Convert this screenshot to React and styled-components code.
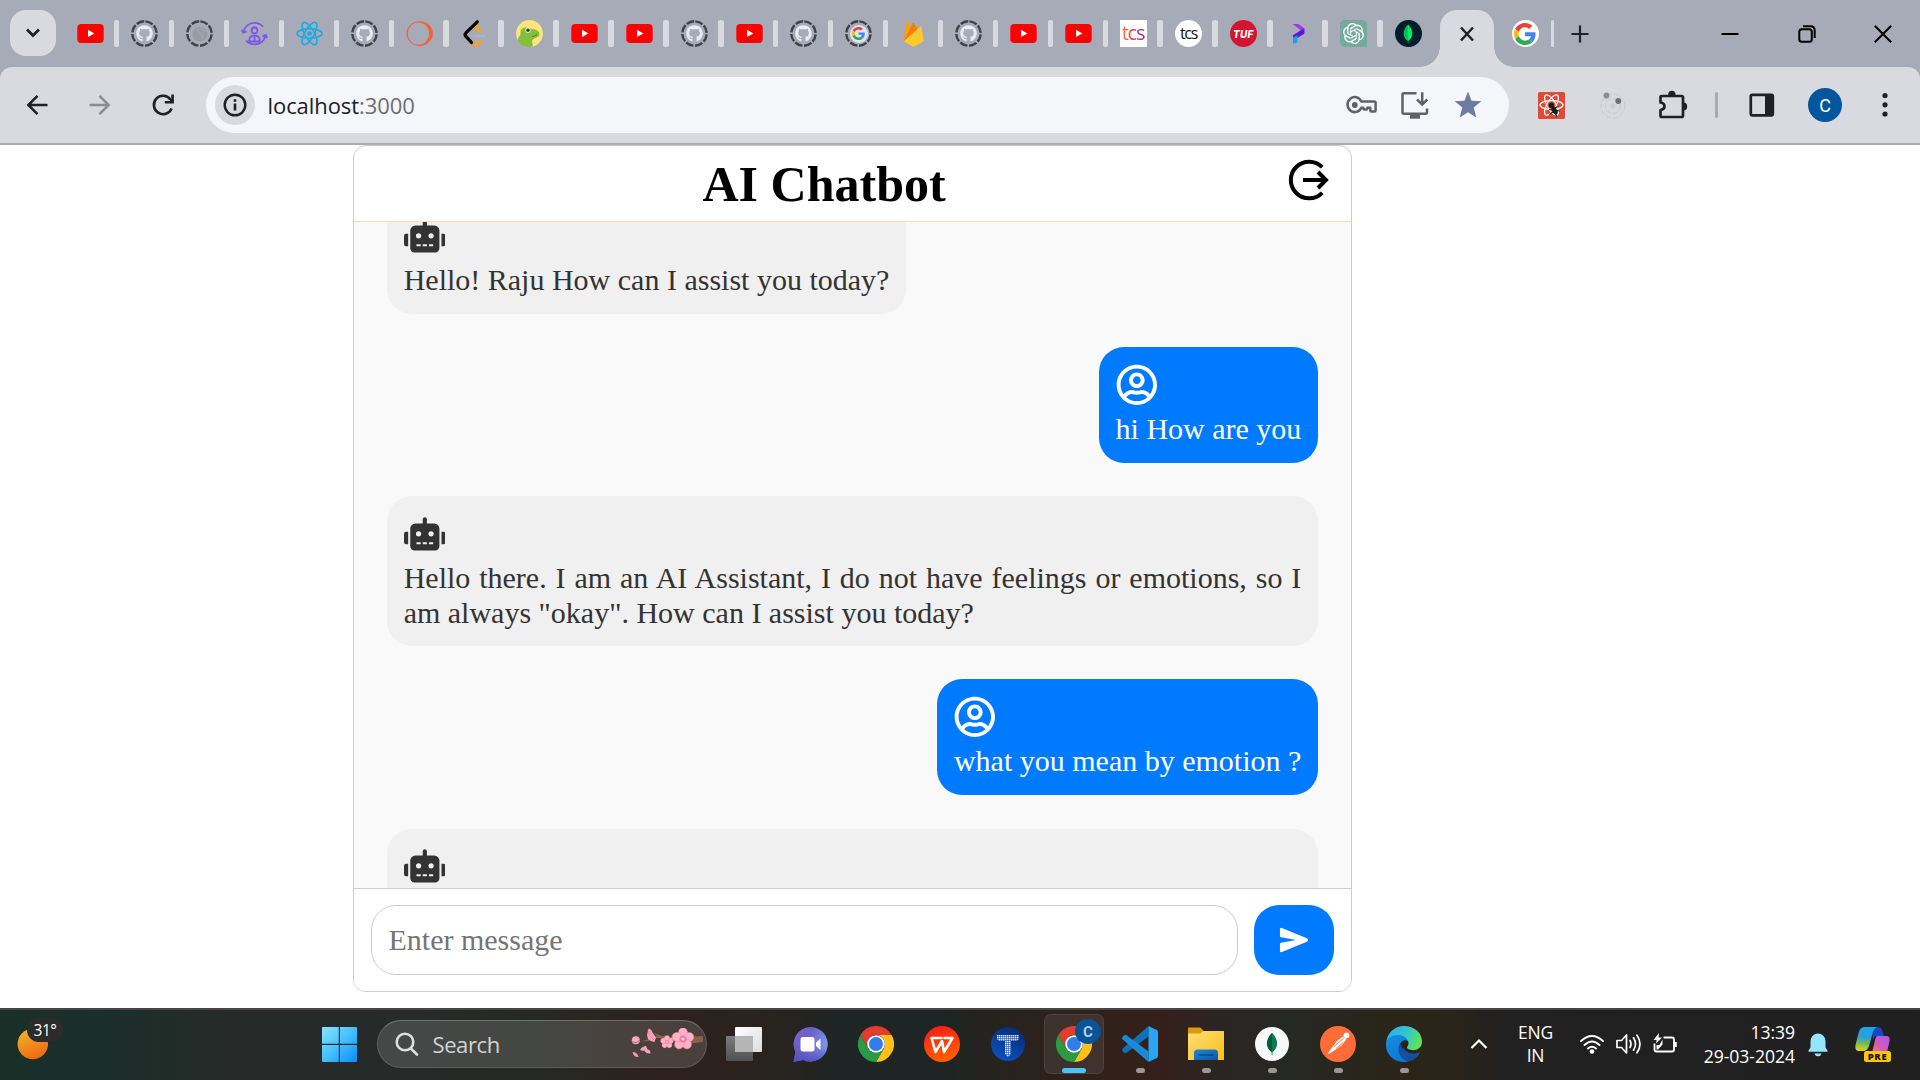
import React from "react";
import styled, { createGlobalStyle, css } from "styled-components";
import { FaGithub, FaRobot, FaRegUserCircle } from "react-icons/fa";
import { IoSend } from "react-icons/io5";
import { SiOpenai } from "react-icons/si";

const GlobalStyle = createGlobalStyle`
  *, *::before, *::after { box-sizing: border-box; }
  html, body { margin: 0; padding: 0; overflow: hidden; background: #fff; }
  svg { display: block; flex: none; }
`;

const SERIF = `"Liberation Serif", "Times New Roman", serif`;
const UI = `"Open Sans", "Noto Sans", sans-serif`;

const Screen = styled.div`
  width: 1920px;
  height: 1080px;
  display: flex;
  flex-direction: column;
  overflow: hidden;
  background: #fff;
  font-family: ${UI};
`;

/* ---------- browser chrome ---------- */

const TabStrip = styled.div`
  height: 67px;
  flex: none;
  display: flex;
  align-items: flex-start;
  padding-left: 10px;
  background: #a7abb7;
`;

const TabSearch = styled.div`
  width: 46px;
  height: 46px;
  margin: 10px 8.5px 0 0;
  display: flex;
  align-items: center;
  justify-content: center;
  border-radius: 16px;
  background: #d9dadf;
`;

const Tab = styled.div`
  flex: none;
  width: ${(p) => p.$width || 54.93}px;
  height: 67px;
  padding-left: 12px;
  display: flex;
  align-items: center;
  justify-content: space-between;
`;

const TabSeparator = styled.span`
  width: ${(p) => p.$width || 5.5}px;
  height: 27px;
  border-radius: 2px;
  background: #d9dadf;
`;

const ActiveTab = styled.div`
  position: relative;
  flex: none;
  width: 53.5px;
  height: 57px;
  margin: 10px 0 0 2.5px;
  padding-top: 14px;
  display: flex;
  justify-content: center;
  border-radius: 17px 17px 0 0;
  background: #d9dadf;
  &::before,
  &::after {
    content: "";
    position: absolute;
    bottom: 0;
    width: 20px;
    height: 20px;
  }
  &::before {
    right: 100%;
    background: radial-gradient(circle at 0 0, transparent 19.5px, #d9dadf 20px);
  }
  &::after {
    left: 100%;
    background: radial-gradient(circle at 100% 0, transparent 19.5px, #d9dadf 20px);
  }
`;

const GoogleSlot = styled.div`
  margin-left: 6px;
`;

const NewTab = styled.div`
  width: 52px;
  height: 67px;
  display: flex;
  align-items: center;
  justify-content: center;
`;

const WindowControls = styled.div`
  margin: 0 -1px 0 auto;
  display: flex;
`;

const WindowButton = styled.div`
  width: 76.3px;
  height: 67px;
  display: flex;
  align-items: center;
  justify-content: center;
`;

const ToolbarBack = styled.div`
  flex: none;
  background: #a7abb7;
`;

const Toolbar = styled.div`
  height: 78px;
  padding: 0 7px 0 5px;
  display: flex;
  align-items: center;
  border-radius: 12px 12px 0 0;
  border-bottom: 2px solid #abacb2;
  background: #d9dadf;
`;

const ToolCell = styled.div`
  width: ${(p) => p.$width}px;
  display: flex;
  align-items: center;
  justify-content: center;
`;

const AddressBar = styled.div`
  flex: 1;
  height: 56px;
  margin: 0 12.5px 0 12px;
  padding: 0 14px 0 8.5px;
  display: flex;
  align-items: center;
  border-radius: 28px;
  background: #f5f6f9;
`;

const SiteInfo = styled.div`
  width: 40px;
  height: 40px;
  display: flex;
  align-items: center;
  justify-content: center;
  border-radius: 50%;
  background: #d9dadf;
`;

const Url = styled.div`
  flex: 1;
  margin-left: 13px;
  font-size: 22px;
  letter-spacing: -0.07px;
  color: #202124;
  span { color: #6b6e73; }
`;

const ToolDivider = styled.span`
  width: 3px;
  height: 26px;
  margin: 0 12px;
  border-radius: 2px;
  background: #a7abb7;
`;

const Avatar = styled.div`
  width: 34px;
  height: 34px;
  display: flex;
  align-items: center;
  justify-content: center;
  border-radius: 50%;
  background: #02569b;
  color: #fff;
  font: 400 18px Roboto, sans-serif;
`;

/* ---------- tab favicons ---------- */

const RoundBadge = styled.div`
  width: ${(p) => p.$size || 27}px;
  height: ${(p) => p.$size || 27}px;
  display: flex;
  align-items: center;
  justify-content: center;
  border-radius: ${(p) => (p.$square ? 0 : "50%")};
  background: ${(p) => p.$bg};
  color: ${(p) => p.$color};
  font: ${(p) => p.$font};
  letter-spacing: ${(p) => p.$tracking || 0}px;
`;

const TcsLetters = styled.span`
  background: linear-gradient(90deg, #f08a24, #e0364f 45%, #7a2c9b);
  -webkit-background-clip: text;
  background-clip: text;
  color: transparent;
  padding: 0 2px 2px 1px;
`;

const DashedFrame = styled.div`
  display: grid;
  place-items: center;
  width: 27px;
  height: 27px;
  & > * { grid-area: 1 / 1; }
`;

const GptTile = styled.div`
  width: 27px;
  height: 27px;
  display: flex;
  align-items: center;
  justify-content: center;
  border-radius: 5px 5px 0 5px;
  background: #74aa9c;
`;

const YouTube = () => (
  <svg width="27" height="27" viewBox="0 0 27 27">
    <rect x="0.3" y="4" width="26.4" height="19" rx="4" fill="#f00" />
    <path d="M11 9.7v7.4l6.4-3.7z" fill="#fff" />
  </svg>
);

const Dashed = ({ children }) => (
  <DashedFrame>
    <svg width="27" height="27" viewBox="0 0 27 27">
      <circle cx="13.5" cy="13.5" r="12.2" fill="none" stroke="#3f4247" strokeWidth="2.4" strokeDasharray="7.9 1.68" transform="rotate(-86 13.5 13.5)" />
    </svg>
    {children}
  </DashedFrame>
);

const GithubTab = () => (
  <Dashed>
    <FaGithub size={17} color="#e9ecf4" />
  </Dashed>
);

const GlobeTab = () => (
  <Dashed>
    <svg width="16" height="16" viewBox="0 0 16 16">
      <circle cx="8" cy="8" r="7.6" fill="#999ca5" />
      <path d="M5 2.500c3 1 0 3 2 4.500s4 1 3.500 5.500M10 2c0 2 2 2 3 4" stroke="#a3a6b0" strokeWidth="1.4" fill="none" />
    </svg>
  </Dashed>
);

const GoogleG = ({ size }) => (
  <svg width={size} height={size} viewBox="0 0 48 48">
    <path fill="#ea4335" d="M24 9.5c3.54 0 6.71 1.22 9.21 3.6l6.85-6.85C35.9 2.38 30.47 0 24 0 14.62 0 6.51 5.38 2.56 13.22l7.98 6.19C12.43 13.72 17.74 9.5 24 9.5z" />
    <path fill="#4285f4" d="M46.98 24.55c0-1.57-.15-3.09-.38-4.55H24v9.02h12.94c-.58 2.96-2.26 5.48-4.78 7.18l7.73 6c4.51-4.18 7.09-10.36 7.09-17.65z" />
    <path fill="#fbbc05" d="M10.53 28.59c-.48-1.45-.76-2.99-.76-4.59s.27-3.14.76-4.59l-7.98-6.19C.92 16.46 0 20.12 0 24c0 3.88.92 7.54 2.56 10.78l7.97-6.19z" />
    <path fill="#34a853" d="M24 48c6.48 0 11.93-2.13 15.89-5.81l-7.73-6c-2.15 1.45-4.92 2.3-8.16 2.3-6.26 0-11.57-4.22-13.47-9.91l-7.98 6.19C6.51 42.62 14.62 48 24 48z" />
  </svg>
);

const GoogleDashed = () => (
  <Dashed>
    <RoundBadge $bg="#dfe4f2" $size={18}>
      <GoogleG size={13} />
    </RoundBadge>
  </Dashed>
);

const PersonCycle = () => (
  <svg width="27" height="27" viewBox="0 0 27 27" fill="none" stroke="#7b56ee" strokeWidth="1.8">
    <circle cx="13.5" cy="10.4" r="2.900" />
    <path d="M8.300 21.500v-1.700a4.200 4.200 0 0 1 4.200-4.200h2a4.200 4.200 0 0 1 4.200 4.200v1.700zM13.5 16v5" />
    <path d="M2.400 12.200C3.600 6.500 8 2.800 13.500 2.800c3.600 0 6.600 1.500 8.600 4M24.600 15.400C23.400 21 19 24.400 13.500 24.400c-3.500 0-6.300-1.300-8.400-3.700" />
    <path d="M.8 9.800l1.500 2.800 3.300-1.300M26.300 18l-1.500-3-3.400 1.600" />
  </svg>
);

const ReactAtom = () => (
  <svg width="27" height="27" viewBox="0 0 27 27" fill="none" stroke="#1ba8e6" strokeWidth="1.500">
    <circle cx="13.5" cy="13.5" r="2.300" fill="#1ba8e6" stroke="none" />
    {[0, 60, 120].map((a) => (
      <ellipse key={a} cx="13.5" cy="13.5" rx="12.600" ry="4.700" transform={`rotate(${a} 13.5 13.5)`} />
    ))}
  </svg>
);

const OrangeRing = () => (
  <svg width="27" height="27" viewBox="0 0 27 27">
    <path fillRule="evenodd" fill="#f4623a" d="M13.700 1.200a13.200 12.400 0 1 1 0 24.800 13.200 12.400 0 1 1 0-24.800zm-1.200 1.400a10.600 11 0 1 0 0 22 10.600 11 0 1 0 0-22z" />
  </svg>
);

const LeetCode = () => (
  <svg width="27" height="27" viewBox="0 0 27 27" fill="none" strokeLinecap="round" strokeWidth="3">
    <path d="M12 7.500l2.500-1.300 4.300 4.200M10 22.500l3 2.300q1.500.8 3-.3l2.800-2.700" stroke="#ffa116" />
    <path d="M12.500 16h11" stroke="#b3b3b3" strokeWidth="2.200" />
    <path d="M16.300 1.800L4.700 13.200q-1.300 1.500 0 3L10.500 22.500" stroke="#000" strokeWidth="3.200" />
  </svg>
);

const Dino = () => (
  <svg width="27" height="27" viewBox="0 0 27 27">
    <circle cx="13.5" cy="13.5" r="13.400" fill="#fce57d" />
    <path d="M2 21C2 16 5 16 4.500 12.500 4 8.500 8 6.500 12 8c4 1.300 11.500 1 11.500 6 0 4-5.500 3.500-7 6-1 2 .5 4 .3 6.600C10 28 4 25.500 2 21z" fill="#84bf3b" />
    <circle cx="12" cy="10.300" r="2.700" fill="#d8e7c9" />
    <circle cx="12" cy="10.300" r="1.700" fill="#33492b" />
    <path d="M16 16.500q3 .2 5-2.500" stroke="#4c7d21" fill="none" strokeWidth="0.900" />
  </svg>
);

const Firebase = () => (
  <svg width="27" height="27" viewBox="0 0 27 27">
    <path d="M3.700 21.200L6.400 1.500q.4-1 1-.1l4 7z" fill="#ffa000" />
    <path d="M3.700 21.200L13 3q.5-.7 1 0l3.500 6.500z" fill="#f57c00" />
    <path d="M3.700 21.200L20.500 6.500q.8-.4 1 .4L23.600 21.200l-8.800 5q-1.200.5-2.400 0z" fill="#ffca28" />
  </svg>
);

const PurpleP = () => (
  <svg width="27" height="27" viewBox="0 0 27 27">
    <path d="M7.500 4h6l5.800 4.500v5l-5-4.500z" fill="#a234f2" />
    <path d="M19.300 8.500v5.300L8 20.500v-5.200l7-4.600z" fill="#5b17d8" />
    <path d="M8 17.500l4.400-2.300v7.300L8 24z" fill="#13a5f5" />
  </svg>
);

const MongoLeaf = ({ size = 22, a = "#00ed64", b = "#00c452" }) => (
  <svg width={size} height={size} viewBox="0 0 22 22">
    <path d="M11 1.500C7.600 5 6.500 8.300 6.700 11.300c.2 3.200 2 5.300 4 6.500l.1 2.700h.4z" fill={b} />
    <path d="M11 1.500c3.400 3.500 4.500 6.800 4.300 9.800-.2 3.200-2 5.300-4 6.500l-.1 2.700H11z" fill={a} />
  </svg>
);

const TABS = [
  YouTube, GithubTab, GlobeTab, PersonCycle, ReactAtom, GithubTab, OrangeRing, LeetCode, Dino,
  YouTube, YouTube, GithubTab, YouTube, GithubTab, GoogleDashed, Firebase, GithubTab, YouTube, YouTube,
  () => (
    <RoundBadge $bg="#fff" $square $font="400 20px/27px 'Open Sans', sans-serif" $tracking={-1.2}>
      <TcsLetters>tcs</TcsLetters>
    </RoundBadge>
  ),
  () => (
    <RoundBadge $bg="#fff" $color="#111" $font="500 16px/23px 'Open Sans', sans-serif" $tracking={-1.3}>tcs</RoundBadge>
  ),
  () => (
    <RoundBadge $bg="#d3152f" $color="#fff" $font="italic 800 10px Inter, sans-serif" $tracking={0.3}>TUF</RoundBadge>
  ),
  PurpleP,
  () => (
    <GptTile><SiOpenai size={21} color="#fff" /></GptTile>
  ),
  () => (
    <RoundBadge $bg="#001e2b"><MongoLeaf /></RoundBadge>
  ),
];

/* ---------- toolbar icons ---------- */

const Stroke = ({ w = 24, h = w, color = "#202124", sw = 2.4, d, children, ...rest }) => (
  <svg width={w} height={h} viewBox={`0 0 ${w} ${h}`} fill="none" stroke={color} strokeWidth={sw} {...rest}>
    {d && <path d={d} />}
    {children}
  </svg>
);

const KeyIcon = () => (
  <svg width="32" height="22" viewBox="0 0 32 22" fill="none" stroke="#5f6368" strokeWidth="2.500">
    <path d="M15.300 7.500h13q1.300 0 1.300 1.300v7.700q0 1-1 1h-3.300q-1 0-1-1v-2.800h-3v.8q0 1-1 1h-2q-1 0-1-1v-.8h-2a7.200 7.500 0 1 1 0-6.200z" strokeLinejoin="round" />
    <circle cx="8.800" cy="11" r="2.900" fill="#5f6368" stroke="none" />
  </svg>
);

const InstallIcon = () => (
  <svg width="28" height="30" viewBox="0 0 28 30" fill="none" stroke="#5f6368" strokeWidth="2.500">
    <path d="M15.500 3.300H3q-1.500 0-1.500 1.500v17.400q0 1.500 1.500 1.500h21.500q1.500 0 1.500-1.500V18.500" />
    <path d="M9 26.700h10" strokeWidth="4" />
    <path d="M21.200 2.200v12M16 9.500l5.200 5 5.200-5" />
  </svg>
);

const StarIcon = () => (
  <svg width="28" height="28" viewBox="0 0 28 28">
    <path d="M14 .5l3.500 9.300 9.800.5-7.600 6.300 2.600 9.900L14 21.200l-8.300 5.300 2.600-9.900L.7 10.300l9.800-.5z" fill="#6d7ba3" />
  </svg>
);

const ReactDebug = () => (
  <svg width="27" height="27" viewBox="0 0 27 27">
    <rect width="27" height="27" rx="1.500" fill="#dd4b38" />
    <g fill="none" stroke="#fff" strokeWidth="1.200">
      {[0, 60, 120].map((a) => (
        <ellipse key={a} cx="13.500" cy="13" rx="11.500" ry="4.400" transform={`rotate(${a} 13.500 13)`} />
      ))}
    </g>
    <circle cx="13.300" cy="13.200" r="2.600" fill="#1b1b1b" />
    <ellipse cx="16.500" cy="18.500" rx="2.400" ry="4.200" transform="rotate(-32 16.500 18.500)" fill="#1b1b1b" />
    <path d="M11 17.500l4-.5M11.500 22.500l4-3M18.500 24.500l-1-3.500M21.500 19l-4-.5M20.500 14.500l-4 1.500" stroke="#1b1b1b" strokeWidth="1.200" />
  </svg>
);

const OrbitIcon = () => (
  <svg width="27" height="27" viewBox="0 0 27 27" fill="none" stroke="#c9cacd" strokeWidth="1">
    <circle cx="14" cy="14" r="12" strokeDasharray="5 2" />
    <circle cx="14" cy="14" r="7.500" strokeDasharray="5 2" />
    <circle cx="14" cy="14" r="2.600" fill="#cdcdcf" stroke="none" />
    <circle cx="7.500" cy="3.500" r="2.900" fill="#8d8d8f" stroke="none" />
    <circle cx="19.300" cy="9" r="2.900" fill="#6f7072" stroke="none" />
  </svg>
);

const PuzzleIcon = () => (
  <svg width="30" height="30" viewBox="0 0 30 30">
    <path d="M3.500 6H23.500q1.500 0 1.500 1.500v18q0 1.500-1.500 1.500H4q-1.500 0-1.500-1.500v-5.500q4-.5 4-3.700t-4-3.800V7q0-1 1-1z" fill="none" stroke="#202124" strokeWidth="2.700" strokeLinejoin="round" />
    <path d="M10.200 5a3.700 4.200 0 0 1 7.400 0zM25.500 12.500a3.700 3.900 0 0 1 0 7.800z" fill="#202124" />
  </svg>
);

/* ---------- chat app ---------- */

const Page = styled.main`
  flex: 1;
  min-height: 0;
  padding-left: 353px;
  background: #fff;
`;

const Chat = styled.section`
  width: 999px;
  height: 847px;
  display: flex;
  flex-direction: column;
  overflow: hidden;
  border: 1px solid #ccc;
  border-radius: 13px;
  font-family: ${SERIF};
`;

const ChatHeader = styled.header`
  height: 76px;
  flex: none;
  padding: 0 21px 0 348.500px;
  display: flex;
  align-items: flex-start;
  justify-content: space-between;
  border-bottom: 1px solid #f5deb3;
`;

const Title = styled.h1`
  margin: 8.500px 0 0;
  font-size: 50px;
  line-height: 58px;
  font-weight: 700;
  color: #000;
`;

const LogoutSlot = styled.div`
  margin-top: 12px;
`;

const Messages = styled.div`
  flex: 1;
  min-height: 0;
  padding: 0 33px;
  display: flex;
  flex-direction: column;
  gap: 33.300px;
  overflow: hidden;
  background: #f9f9f9;
  & > :first-child { margin-top: -24px; }
`;

const Bubble = styled.div`
  flex: none;
  align-self: ${(p) => (p.$user ? "flex-end" : "flex-start")};
  width: ${(p) => (p.$full ? "100%" : "auto")};
  min-height: 115.900px;
  padding: 16.670px 16.670px 16.300px;
  border-radius: 25px;
  background: ${(p) => (p.$user ? "#007bff" : "#f0f0f0")};
  color: ${(p) => (p.$user ? "#fff" : "#333")};
`;

const BubbleText = styled.p`
  margin: 6.600px 0 0;
  font-size: 30px;
  line-height: 34.300px;
  text-align: justify;
`;

const Composer = styled.footer`
  height: 103px;
  flex: none;
  padding: 16px 17px 0;
  display: flex;
  gap: 16px;
  border-top: 1px solid #ccc;
  background: #fff;
`;

const MessageInput = styled.input`
  flex: 1;
  height: 70px;
  padding: 0 16.500px;
  border: 1px solid #ccc;
  border-radius: 25px;
  outline: none;
  background: #fff;
  font: 30px ${SERIF};
  &::placeholder { color: #757575; opacity: 1; }
`;

const SendButton = styled.button`
  width: 80px;
  height: 70px;
  padding: 0;
  display: flex;
  align-items: center;
  justify-content: center;
  border: 0;
  border-radius: 25px;
  background: #007bff;
  color: #fff;
`;

const LogoutIcon = () => (
  <svg width="42" height="44" viewBox="0 0 42 44" fill="none" stroke="#000" strokeWidth="4">
    <path d="M34.200 9.200A18.300 18.300 0 1 0 34.200 34.800" />
    <path d="M15 22h24M30 14l8 8-8 8" />
  </svg>
);

const Message = ({ user, full, children }) => (
  <Bubble $user={user} $full={full}>
    {user ? <FaRegUserCircle size={41.67} /> : <FaRobot size={41.67} />}
    {children && <BubbleText>{children}</BubbleText>}
  </Bubble>
);

/* ---------- taskbar ---------- */

const Taskbar = styled.div`
  height: 72px;
  flex: none;
  display: flex;
  align-items: center;
  padding-bottom: 2px;
  border-top: 2px solid #474645;
  background: linear-gradient(90deg, #1b2f29 0, #1c2e29 110px, #262b29 230px, #262b2a 360px, #272824 560px, #2d211c 660px, #2b221d 740px, #1f2524 840px, #1e2524 940px, #2d211b 1050px, #35201a 1160px, #2a2523 1220px, #262823 1290px, #2a2518 1400px, #2c2418 1440px, #212121 1500px, #202020 100%);
  color: #fff;
`;

const Weather = styled.div`
  flex: none;
  width: 322px;
  height: 68px;
  padding: 17px 0 0 17px;
`;

const WeatherStack = styled.div`
  position: relative;
  width: 31px;
  height: 36px;
`;

const WeatherBadge = styled.span`
  position: absolute;
  left: 10px;
  top: -9px;
  width: 36px;
  height: 24px;
  display: flex;
  align-items: center;
  justify-content: center;
  border-radius: 12px;
  background: #2b2c2b;
  font-size: 15.500px;
  line-height: 20px;
  padding-bottom: 1px;
  letter-spacing: -0.500px;
`;

const SearchBox = styled.div`
  flex: none;
  width: 330px;
  height: 48px;
  margin: 0 4px 0 20px;
  padding: 0 3px 0 17px;
  display: flex;
  align-items: center;
  border: 1px solid rgba(255, 255, 255, 0.13);
  border-top-color: rgba(255, 255, 255, 0.24);
  border-radius: 24px;
  background: rgba(255, 255, 255, 0.140);
`;

const SearchLabel = styled.span`
  flex: 1;
  margin-left: 13.500px;
  font-size: 22px;
  letter-spacing: -0.400px;
  color: #d3d4d2;
`;

const TaskItem = styled.div`
  position: relative;
  flex: none;
  width: 60px;
  height: 60px;
  margin: 0 3px;
  display: flex;
  align-items: center;
  justify-content: center;
  border-radius: 7px;
  border: 1.500px solid transparent;
  ${(p) => p.$active && css`
    background: rgba(255, 255, 255, 0.080);
    border-color: rgba(255, 255, 255, 0.080);
  `}
  &::after {
    content: "";
    display: ${(p) => (p.$active || p.$running ? "block" : "none")};
    position: absolute;
    bottom: 0;
    width: ${(p) => (p.$active ? 24 : 9)}px;
    height: 5px;
    border-radius: 3px;
    background: ${(p) => (p.$active ? "#4cc2ff" : "#9c9792")};
  }
`;

const ProfileBadge = styled.span`
  position: absolute;
  right: 2px;
  top: 4px;
  width: 26px;
  height: 25px;
  display: flex;
  align-items: center;
  justify-content: center;
  border-radius: 50%;
  background: #075497;
  color: #b4cfe6;
  font: 700 15px Roboto, sans-serif;
`;

const Disc = styled.div`
  width: ${(p) => p.$size}px;
  height: ${(p) => p.$size}px;
  display: flex;
  align-items: center;
  justify-content: center;
  border-radius: 50%;
  background: ${(p) => p.$bg};
`;

const Tray = styled.div`
  flex: none;
  margin-left: auto;
  height: 68px;
  padding-right: 29px;
  display: flex;
  align-items: center;
`;

const TrayIcons = styled.div`
  display: flex;
  gap: 12px;
  margin: 0 18px 0 12.500px;
`;

const Language = styled.div`
  width: 64px;
  margin-left: 16px;
  text-align: center;
  font-size: 17.500px;
  line-height: 23.500px;
  letter-spacing: -0.200px;
`;

const Clock = styled.div`
  width: 100px;
  text-align: right;
  font-size: 17.600px;
  line-height: 24px;
  letter-spacing: -0.050px;
  white-space: nowrap;
`;

const BellSlot = styled.div`
  margin: 1px 27px 0 13px;
`;

const Copilot = styled.div`
  position: relative;
  width: 36px;
  height: 36px;
`;

const PreTag = styled.span`
  position: absolute;
  left: 9px;
  bottom: 0;
  width: 27px;
  height: 11px;
  border-radius: 2.500px;
  background: #f9c80e;
  color: #1c1700;
  font: 800 9.500px/11px "Open Sans", sans-serif;
  letter-spacing: 0.700px;
  text-align: center;
`;

const Blossom = ({ x, y, s }) => (
  <g transform={`translate(${x} ${y}) scale(${s})`}>
    {[0, 72, 144, 216, 288].map((a) => (
      <ellipse key={a} cx="0" cy="-5.500" rx="4.100" ry="4.500" fill="#fdb3c6" stroke="#ee86a2" strokeWidth="0.500" transform={`rotate(${a})`} />
    ))}
    <circle r="3.200" fill="#f37a9c" />
    <circle r="1.400" fill="#e3d6f2" />
  </g>
);

const CherryBranch = () => (
  <svg width="72" height="32" viewBox="0 0 72 32">
    <path d="M72 8v6l-14 1.500-6-2-14-2.500-12-1-8 3-8 .5 8-2.500 8-3-3-3 8 3 14 1.500z" fill="#8d5f4d" />
    <path d="M17.500.5q3 .5 4 4l3.500 5-1.500 4.500q-4-.5-6.500-3l-1-4z" fill="#f9a3bb" />
    <path d="M17 2l2 6 4 4" stroke="#e57d9b" strokeWidth="0.800" fill="none" />
    <circle cx="4.800" cy="12.300" r="4" fill="#f9a9bf" />
    <path d="M1.500 13.500q4 3 7-1.500" stroke="#c75579" fill="none" />
    <path d="M9 21.500q3-4 6-3.500l1.500 3.500q3 0 3 4-5 .5-6-3-3 1-4.500-1z" fill="#f9a0b8" />
    <path d="M1.500 24q5 0 6 5-5 .5-6-5z" fill="#f796b2" />
    <Blossom x={36} y={14} s={0.660} />
    <Blossom x={52} y={11} s={1.120} />
  </svg>
);

const ChromeLogo = () => (
  <svg width="36" height="36" viewBox="0 0 48 48">
    <path d="M3.200 12A24 24 0 0 1 44.800 12H24a12 12 0 0 0-10.400 18z" fill="#e33b2e" />
    <path d="M44.800 12A24 24 0 0 1 24 48L34.400 30A12 12 0 0 0 24 12z" fill="#fbc116" />
    <path d="M24 48A24 24 0 0 1 3.200 12L13.600 30A12 12 0 0 0 34.400 30z" fill="#2a9a45" />
    <circle cx="24" cy="24" r="11.800" fill="#fff" />
    <circle cx="24" cy="24" r="9.300" fill="#2f7de9" />
  </svg>
);

const TaskViewIcon = () => (
  <svg width="36" height="34" viewBox="0 0 36 34">
    <defs>
      <linearGradient id="tv" x1="0" y1="0" x2="1" y2="1"><stop stopColor="#fff" /><stop offset="1" stopColor="#dcdcdc" /></linearGradient>
      <linearGradient id="tvb" x1="0" y1="0" x2="0" y2="1"><stop stopColor="#7c7c7c" /><stop offset="1" stopColor="#505050" /></linearGradient>
    </defs>
    <rect x="0" y="9" width="27" height="25" rx="1" fill="url(#tvb)" />
    <rect x="9" y="0" width="27" height="25" rx="1" fill="url(#tv)" />
    <rect x="9" y="9" width="18" height="16" fill="#b5b5b5" />
  </svg>
);

const ChatIcon = () => (
  <svg width="35" height="35" viewBox="0 0 35 35">
    <defs>
      <linearGradient id="ch" x1="0" y1="0" x2="1" y2="0.600"><stop stopColor="#7b5fc4" /><stop offset="0.450" stopColor="#6c62c8" /><stop offset="1" stopColor="#7fa0f2" /></linearGradient>
      <linearGradient id="ch2" x1="0" y1="0" x2="0" y2="1"><stop offset="0.500" stopColor="#5b50c4" stopOpacity="0" /><stop offset="1" stopColor="#564cc0" /></linearGradient>
    </defs>
    {["url(#ch)", "url(#ch2)"].map((f) => (
      <path key={f} d="M17.500 0A17.200 17.200 0 1 1 10.500 32.900L.5 34.700 2.400 25A17.200 17.200 0 0 1 17.500 0z" fill={f} />
    ))}
    <rect x="7.500" y="10" width="14" height="14.500" rx="2.500" fill="#fff" />
    <path d="M23 15.500l4.500-4v11.500l-4.500-4z" fill="#fff" />
  </svg>
);

const WpsIcon = () => (
  <svg width="36" height="36" viewBox="0 0 36 36">
    <defs><linearGradient id="wp" x1="0.400" y1="0" x2="0.700" y2="1"><stop stopColor="#fb1f16" /><stop offset="1" stopColor="#ff6400" /></linearGradient></defs>
    <circle cx="18" cy="18" r="18" fill="url(#wp)" />
    <path d="M17.500 12H7.500l4 14L18 15l2 11L28.500 12h-8" fill="none" stroke="#fff" strokeWidth="2.600" strokeLinejoin="round" strokeLinecap="round" />
  </svg>
);

const TDotsIcon = () => (
  <svg width="34" height="34" viewBox="0 0 34 34">
    <defs>
      <linearGradient id="td" x1="0.800" y1="0" x2="0.300" y2="1"><stop stopColor="#072a72" /><stop offset="1" stopColor="#0c52bd" /></linearGradient>
      <pattern id="dots" width="2" height="2" patternUnits="userSpaceOnUse"><rect width="1.500" height="1.500" fill="#d7e6ff" /></pattern>
    </defs>
    <circle cx="17" cy="17" r="17" fill="url(#td)" />
    <path d="M6 8h22v4l-2 2h-6v13l-3 3-3-3V14H8l-2-2z" fill="url(#dots)" />
  </svg>
);

const VsCodeIcon = () => (
  <svg width="36" height="36" viewBox="0 0 36 36">
    <path d="M26.500 0v10.500L4.500 26.800q-1.300.8-2.500-.2L.5 25q-1-1.300.2-2.500z" fill="#1171b8" />
    <path d="M26.500 36V25.500L4.500 9.200q-1.300-.8-2.500.2L.5 11q-1 1.300.2 2.500z" fill="#1b8ad6" />
    <path d="M26.500 0l8.300 3.900q1.200.7 1.200 2v24.200q0 1.300-1.200 2L26.500 36z" fill="#2ba4f3" />
  </svg>
);

const FolderIcon = () => (
  <svg width="36" height="34" viewBox="0 0 36 34">
    <defs>
      <linearGradient id="fo" x1="0" y1="0" x2="1" y2="1"><stop stopColor="#ffdf73" /><stop offset="1" stopColor="#fbbd1d" /></linearGradient>
      <linearGradient id="fb" x1="0" y1="0" x2="1" y2="1"><stop stopColor="#1d88dc" /><stop offset="1" stopColor="#0a58a4" /></linearGradient>
    </defs>
    <path d="M0 1.500Q0 .5 1 .5h10.500q1 0 1.700.8L15.500 4H36v8H0z" fill="#dc9a06" />
    <path d="M0 6.500h12l3-2.500H35q1 0 1 1v28H0z" fill="url(#fo)" />
    <path d="M6 33V26q0-3.500 3.500-3.500h17q3.500 0 3.500 3.500v7z" fill="url(#fb)" />
    <path d="M11 28h14" stroke="#0b4a86" strokeWidth="1.500" strokeLinecap="round" />
  </svg>
);

const EdgeIcon = () => (
  <svg width="36" height="36" viewBox="0 0 36 36">
    <defs>
      <linearGradient id="e1" x1="0" y1="0.300" x2="1" y2="0.600"><stop stopColor="#2ab0e8" /><stop offset="0.500" stopColor="#2fc6d3" /><stop offset="1" stopColor="#66e24f" /></linearGradient>
      <linearGradient id="e2" x1="0" y1="0" x2="0.600" y2="1"><stop stopColor="#1b8fdd" /><stop offset="1" stopColor="#0a78d6" /></linearGradient>
    </defs>
    <path d="M14.500 15.500c-4 4-5.500 10-2 15 2.500 3.500 6.500 5.500 10.500 5 5-1.500 9-4.500 11-8.500.2-.8-.5-1-1.200-.6-4 1.900-8 1.400-11.800-1s-7-5-6.500-9.900z" fill="#13509f" />
    <path d="M0 17C1.500 12 6 8 12.500 8c6 0 10 3.800 10 7.500-3-2.500-8-1-9.500 4.500-2 7 3 14 9 15.800C8 38-1 28 0 17z" fill="url(#e2)" />
    <path d="M0 17C1 7 8.500 0 18 0c10.500 0 18 7 18 15.500 0 6-4.500 8.700-9 8.700-4 0-6-1.400-6-2.600 0-.9 1.500-1.800 1.500-4.300C22.500 12.500 17 9 11.500 9 6 9 1.500 12 0 17z" fill="url(#e1)" />
  </svg>
);

const PostmanIcon = () => (
  <Disc $size={36} $bg="#ff6c37">
    <svg width="36" height="36" viewBox="0 0 36 36">
      <circle cx="26.500" cy="9.300" r="2.900" fill="#fff" />
      <path d="M22.500 10.500l4 2.600-5 6.300-5 3.500L9 28l-1-.8 5.500-7.700 2.500-3.500z" fill="#fff" />
      <path d="M13.500 21l10-8.500M16 22.500l7-6" stroke="#ff6c37" strokeWidth="0.900" />
    </svg>
  </Disc>
);

const WindowsLogo = () => (
  <svg width="35" height="35" viewBox="0 0 35 35">
    <defs><linearGradient id="wn" gradientUnits="userSpaceOnUse" x1="0" y1="0" x2="35" y2="35"><stop stopColor="#8be3ff" /><stop offset="0.500" stopColor="#43c0fd" /><stop offset="1" stopColor="#0a8df8" /></linearGradient></defs>
    <path d="M1 0h15.800v16.800H0V1q0-1 1-1zM18 0h16q1 0 1 1v15.800H18zM0 18h16.800v17H1q-1 0-1-1zM18 18h17v16q0 1-1 1H18z" fill="url(#wn)" />
  </svg>
);

const CopilotIcon = () => (
  <svg width="36" height="36" viewBox="0 0 36 36">
    <defs>
      <linearGradient id="cp1" x1="0.300" y1="0" x2="0.200" y2="1"><stop stopColor="#17a4f0" /><stop offset="0.400" stopColor="#2c9fd6" /><stop offset="0.700" stopColor="#7bbf4b" /><stop offset="1" stopColor="#f0cf1c" /></linearGradient>
      <linearGradient id="cp2" x1="1" y1="0" x2="0" y2="1"><stop stopColor="#a45cf2" /><stop offset="0.500" stopColor="#d659b8" /><stop offset="1" stopColor="#ff8c48" /></linearGradient>
    </defs>
    <path d="M17 1h6q3 0 4 3l2 6h-7q-3 0-4 4z" fill="#1647c7" />
    <path d="M9 1h13q-3 1-4 5l-4 14q-1.500 5-6 5H4q-4.500 0-3.500-6L3.500 7Q5 1 9 1z" fill="url(#cp1)" />
    <path d="M22 10h9q4.500 0 3.500 5l-2 9q-1.500 6-6 6H13q3.500-1 4.500-5l2.500-11q.7-3 2-4z" fill="url(#cp2)" />
  </svg>
);

const TASKS = [
  { icon: <TaskViewIcon /> },
  { icon: <ChatIcon /> },
  { icon: <ChromeLogo /> },
  { icon: <WpsIcon /> },
  { icon: <TDotsIcon /> },
  { icon: <><ChromeLogo /><ProfileBadge>C</ProfileBadge></>, active: true },
  { icon: <VsCodeIcon />, running: true },
  { icon: <FolderIcon />, running: true },
  { icon: <Disc $size={34} $bg="#f8f8f8"><MongoLeaf size={26} a="#0b7a4e" b="#065c3a" /></Disc>, running: true },
  { icon: <PostmanIcon />, running: true },
  { icon: <EdgeIcon />, running: true },
];

export default function App() {
  return (
    <Screen>
      <GlobalStyle />
      <TabStrip>
        <TabSearch>
          <Stroke w={16} h={12} sw={2.8} d="M2 2.500l6 6 6-6" />
        </TabSearch>
        {TABS.map((Icon, i) => (
          <Tab key={i}>
            <Icon />
            {i < TABS.length - 1 && <TabSeparator />}
          </Tab>
        ))}
        <ActiveTab>
          <Stroke w={20} sw={2.5} d="M4 3.500l12 13M16 3.500l-12 13" />
        </ActiveTab>
        <Tab $width={60.5}>
          <GoogleSlot>
            <RoundBadge $bg="#fff"><GoogleG size={22} /></RoundBadge>
          </GoogleSlot>
          <TabSeparator $width={3.5} />
        </Tab>
        <NewTab>
          <Stroke w={18} sw={2.2} d="M9 .5v17M.5 9h17" />
        </NewTab>
        <WindowControls>
          <WindowButton><Stroke w={18} color="#000" sw={2} d="M.5 9h17" /></WindowButton>
          <WindowButton>
            <Stroke w={18} color="#000" sw={2}>
              <rect x="1.300" y="4.300" width="12.500" height="12.500" rx="2.500" />
              <path d="M5 1.300h7.500q4.200 0 4.200 4.200V13" />
            </Stroke>
          </WindowButton>
          <WindowButton><Stroke w={18} color="#000" sw={2} d="M.8.8l16.400 16.400M17.200.8L.8 17.200" /></WindowButton>
        </WindowControls>
      </TabStrip>

      <ToolbarBack>
        <Toolbar>
          <ToolCell $width={63}><Stroke w={22} sw={2.5} d="M21.500 11H2.500M11.500 1.800L2.300 11l9.200 9.200" /></ToolCell>
          <ToolCell $width={63}><Stroke w={22} sw={2.5} color="#8b8d92" d="M.5 11h19M10.500 1.800l9.200 9.200-9.200 9.200" /></ToolCell>
          <ToolCell $width={63}>
            <Stroke w={24} sw={2.6}>
              <path d="M20.600 15.500A9.200 9.200 0 1 1 19.500 6.500l2 2.200" />
              <path d="M21.600 1.500v7.800h-7.800" />
            </Stroke>
          </ToolCell>
          <AddressBar>
            <SiteInfo>
              <Stroke w={24} sw={2.4}>
                <circle cx="12" cy="12" r="10.300" />
                <path d="M12 10.500v7M12 6.200v2.500" strokeWidth="2.600" />
              </Stroke>
            </SiteInfo>
            <Url>localhost<span>:3000</span></Url>
            <ToolCell $width={53}><KeyIcon /></ToolCell>
            <ToolCell $width={53}><InstallIcon /></ToolCell>
            <ToolCell $width={53}><StarIcon /></ToolCell>
          </AddressBar>
          <ToolCell $width={60.6}><ReactDebug /></ToolCell>
          <ToolCell $width={60.6}><OrbitIcon /></ToolCell>
          <ToolCell $width={60.6}><PuzzleIcon /></ToolCell>
          <ToolDivider />
          <ToolCell $width={63}>
            <Stroke w={26} h={24} sw={2.7}>
              <rect x="1.800" y="1.800" width="22" height="20.500" rx="1.500" />
              <path d="M16 2h7v20h-7z" fill="#202124" stroke="none" />
            </Stroke>
          </ToolCell>
          <ToolCell $width={64}><Avatar>C</Avatar></ToolCell>
          <ToolCell $width={56}>
            <svg width="6" height="26" viewBox="0 0 6 26" fill="#202124">
              <circle cx="3" cy="3.500" r="2.600" />
              <circle cx="3" cy="12.800" r="2.600" />
              <circle cx="3" cy="22" r="2.600" />
            </svg>
          </ToolCell>
        </Toolbar>
      </ToolbarBack>

      <Page>
        <Chat>
          <ChatHeader>
            <Title>AI Chatbot</Title>
            <LogoutSlot><LogoutIcon /></LogoutSlot>
          </ChatHeader>
          <Messages>
            <Message>Hello! Raju How can I assist you today?</Message>
            <Message user>hi How are you</Message>
            <Message full>
              Hello there. I am an AI Assistant, I do not have feelings or emotions, so I am always "okay". How can I assist you today?
            </Message>
            <Message user>what you mean by emotion ?</Message>
            <Message full />
          </Messages>
          <Composer>
            <MessageInput placeholder="Enter message" />
            <SendButton><IoSend size={30} /></SendButton>
          </Composer>
        </Chat>
      </Page>

      <Taskbar>
        <Weather>
          <WeatherStack>
            <svg width="31" height="36" viewBox="0 0 31 36">
              <defs><linearGradient id="su" x1="0.200" y1="0" x2="0.700" y2="1"><stop stopColor="#f0b429" /><stop offset="1" stopColor="#ee6610" /></linearGradient></defs>
              <circle cx="15.800" cy="17" r="15.200" fill="url(#su)" />
            </svg>
            <WeatherBadge>31°</WeatherBadge>
          </WeatherStack>
        </Weather>
        <WindowsLogo />
        <SearchBox>
          <Stroke w={24} color="#dededc" sw={2.6}>
            <circle cx="10" cy="10" r="8.300" />
            <path d="M15.800 16.500l6.200 6" strokeLinecap="round" />
          </Stroke>
          <SearchLabel>Search</SearchLabel>
          <CherryBranch />
        </SearchBox>
        {TASKS.map((t, i) => (
          <TaskItem key={i} $active={t.active} $running={t.running}>{t.icon}</TaskItem>
        ))}
        <Tray>
          <Stroke w={18} h={12} color="#fff" sw={2.2} d="M1.500 10l7.500-7.500 7.500 7.500" />
          <Language>ENG<br />IN</Language>
          <TrayIcons>
            <Stroke w={24} h={22} color="#fff" sw={1.9} strokeLinecap="round">
              <path d="M1 8q11-10 22 0M4.500 12q7.500-7 15 0M8 15.500q4-3.500 8 0" />
              <circle cx="12" cy="18.500" r="1.400" fill="#fff" />
            </Stroke>
            <Stroke w={25} h={22} color="#fff" sw={1.7} strokeLinecap="round">
              <path d="M1 7.500h4.500l5-5.500v18l-5-5.500H1z" strokeLinejoin="round" />
              <path d="M14 7.500q2 3.500 0 7M17.500 4.800q4 6.200 0 12.400M21 2.200q6 8.800 0 17.600" />
            </Stroke>
            <Stroke w={24} h={22} color="#fff" sw={1.8}>
              <path d="M10.500 4.500H19q2 0 2 2v10q0 2-2 2H3.500q-2 0-2-2v-6" />
              <path d="M21 9h2.800v5H21z" fill="#fff" stroke="none" />
              <path d="M3.500 16.500V12h3l3-5.500v5l-4.500 5z" fill="#fff" stroke="none" />
              <path d="M6 0L.5 7h3.200L3 10.500l6-6H5.500z" fill="#fff" stroke="none" />
            </Stroke>
          </TrayIcons>
          <Clock>13:39<br />29-03-2024</Clock>
          <BellSlot>
            <svg width="20" height="24" viewBox="0 0 20 24" fill="#95e6fd">
              <path d="M10 .5a7.500 7.500 0 0 1 7.500 7.500v6.500l2 3q.5 1.300-.8 1.300H1.300Q0 18.800.5 17.500l2-3V8A7.500 7.500 0 0 1 10 .5zM6.300 20.500h7.400q-.8 2.700-3.700 2.700t-3.700-2.700z" />
            </svg>
          </BellSlot>
          <Copilot>
            <CopilotIcon />
            <PreTag>PRE</PreTag>
          </Copilot>
        </Tray>
      </Taskbar>
    </Screen>
  );
}
